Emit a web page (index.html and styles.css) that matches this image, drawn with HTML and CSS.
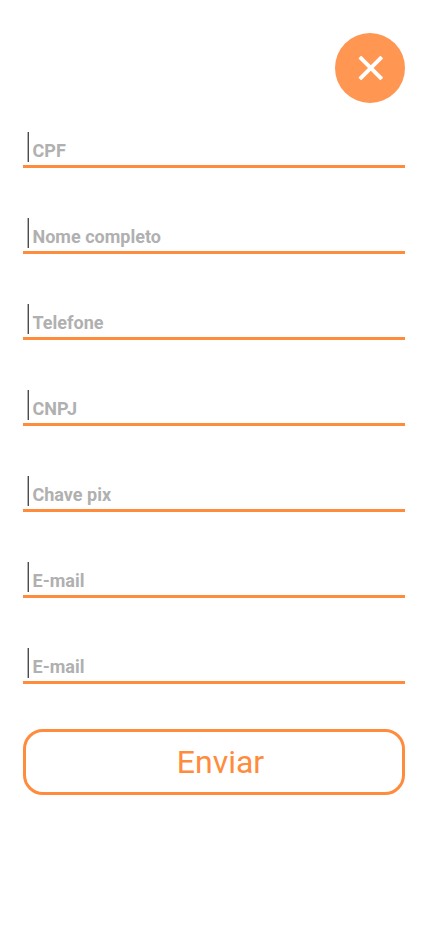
FILE: index.html
```html
<!DOCTYPE html>
<html lang="pt-BR">
<head>
<meta charset="utf-8">
<title>Cadastro</title>
<link rel="stylesheet" href="styles.css">
</head>
<body>
<main class="screen">
  <button class="close" type="button" aria-label="Fechar">
    <svg class="close-icon" viewBox="0 0 24 24">
      <g transform="translate(12.8 12)">
        <rect x="-15.6" y="-2" width="31.2" height="4" rx="0.9" transform="rotate(45)"/>
        <rect x="-15.6" y="-2" width="31.2" height="4" rx="0.9" transform="rotate(-45)"/>
      </g>
    </svg>
  </button>
  <form class="form">
    <label class="field"><span class="caret"></span><span class="label">CPF</span></label>
    <label class="field"><span class="caret"></span><span class="label">Nome completo</span></label>
    <label class="field"><span class="caret"></span><span class="label">Telefone</span></label>
    <label class="field"><span class="caret"></span><span class="label">CNPJ</span></label>
    <label class="field"><span class="caret"></span><span class="label">Chave pix</span></label>
    <label class="field"><span class="caret"></span><span class="label">E-mail</span></label>
    <label class="field"><span class="caret"></span><span class="label">E-mail</span></label>
    <button class="submit" type="button">Enviar</button>
  </form>
</main>
</body>
</html>
```
FILE: styles.css
```css
* { box-sizing: border-box; }
body { margin: 0; background: #fff; font-family: Roboto, sans-serif; }
.screen {
  height: 926px;
  padding: 33px 23px 0;
  display: flex;
  flex-direction: column;
}
.close {
  align-self: flex-end;
  width: 70px;
  height: 70px;
  padding: 0;
  border: 0;
  border-radius: 50%;
  background: #ff9651;
  display: flex;
  align-items: center;
  justify-content: center;
}
.close-icon {
  width: 24px;
  height: 24px;
  fill: #fff;
  overflow: visible;
}
.form {
  margin-top: 29px;
  display: flex;
  flex-direction: column;
  gap: 50px;
}
.field {
  height: 36px;
  padding-left: 4px;
  border-bottom: 3px solid #ff8b3d;
  display: flex;
  align-items: flex-start;
  gap: 3.5px;
}
.caret {
  width: 2px;
  height: 30px;
  background: linear-gradient(90deg, #b4b4b4 50%, #4c4c4c 50%);
}
.label {
  padding-top: 8px;
  font-size: 18px;
  line-height: 21px;
  font-weight: 700;
  color: #b0b0b0;
}
.submit {
  height: 66px;
  margin-top: -5px;
  padding: 0 0 0 13px;
  border: 3px solid #ff8b3d;
  border-radius: 20px;
  background: #fff;
  color: #ff8b3d;
  font: 400 32px/38px Roboto, sans-serif;
}
```
